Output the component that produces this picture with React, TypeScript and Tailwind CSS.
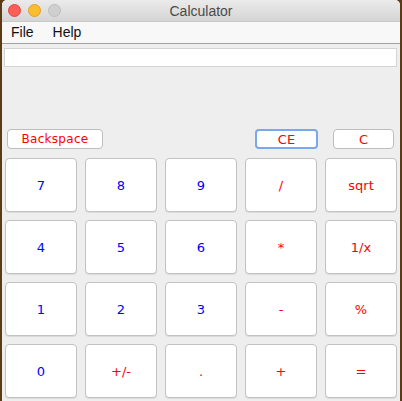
import React from "react";

const digit = "text-[#0000ff]";
const op = "text-[#ff0000]";

const keys: { label: string; cls: string }[] = [
  { label: "7", cls: digit },
  { label: "8", cls: digit },
  { label: "9", cls: digit },
  { label: "/", cls: op },
  { label: "sqrt", cls: op },
  { label: "4", cls: digit },
  { label: "5", cls: digit },
  { label: "6", cls: digit },
  { label: "*", cls: op },
  { label: "1/x", cls: op },
  { label: "1", cls: digit },
  { label: "2", cls: digit },
  { label: "3", cls: digit },
  { label: "-", cls: op },
  { label: "%", cls: op },
  { label: "0", cls: digit },
  { label: "+/-", cls: op },
  { label: ".", cls: op },
  { label: "+", cls: op },
  { label: "=", cls: op },
];

export default function App() {
  return (
    <div className="w-[402px] h-[401px] overflow-hidden bg-[#5b3b16] flex">
      <div className="ml-[2px] w-[398px] h-[401px] flex flex-col rounded-t-[5px] overflow-hidden bg-[#eeeeee]">
        {/* title bar */}
        <div className="h-[22px] shrink-0 grid grid-cols-[1fr_auto_1fr] items-center bg-gradient-to-b from-[#ebebeb] to-[#d5d5d5] border-b border-[#c8c8c8]">
          <div className="flex items-center gap-[7px] pl-[6px]">
            <span className="w-[13px] h-[13px] rounded-full bg-[#fc5f57] border border-[#e2463f]" />
            <span className="w-[13px] h-[13px] rounded-full bg-[#fdbb2e] border border-[#e0a028]" />
            <span className="w-[13px] h-[13px] rounded-full bg-[#cfcfcf] border border-[#bdbdbd]" />
          </div>
          <div className="text-[14px] leading-none text-[#4a4a4a] font-['Liberation_Sans',sans-serif]">
            Calculator
          </div>
          <div />
        </div>
        {/* menu bar */}
        <div className="h-[22px] shrink-0 flex items-center gap-[19px] pl-[9px] bg-[#f8f8f8] border-b border-[#a3a3a3] text-[14px] text-[#111] font-['Liberation_Sans',sans-serif]">
          <span>File</span>
          <span>Help</span>
        </div>
        {/* body */}
        <div className="flex flex-col pt-[4px] px-[2px] font-['DejaVu_Sans',sans-serif]">
          <div className="h-[19px] mr-[1px] bg-white border border-[#d4d4d4]" />
          <div className="h-[62px]" />
          <div className="flex items-center h-[20px] pl-[3px] pr-[4px]">
            <button className="w-[96px] h-[20px] rounded-[4px] bg-white border border-[#bdbdbd] text-[12px] text-[#ff0000] tracking-[0.3px] leading-none">
              Backspace
            </button>
            <div className="flex-1" />
            <button className="w-[63px] h-[20px] rounded-[4px] bg-white border-2 border-[#7aa8ec] text-[13px] text-[#ff0000] leading-none">
              CE
            </button>
            <button className="ml-[15px] w-[61px] h-[20px] rounded-[4px] bg-white border border-[#bdbdbd] text-[13px] text-[#ff0000] leading-none">
              C
            </button>
          </div>
          <div className="grid grid-cols-[repeat(5,72px)] auto-rows-[54px] gap-[8px] mt-[9px] pl-[1px]">
            {keys.map((k, i) => (
              <button
                key={i}
                className={`rounded-[4px] bg-white border border-[#c2c2c2] shadow-[0_1px_0_rgba(0,0,0,0.08)] text-[13px] leading-none ${k.cls}`}
              >
                {k.label}
              </button>
            ))}
          </div>
        </div>
      </div>
    </div>
  );
}
